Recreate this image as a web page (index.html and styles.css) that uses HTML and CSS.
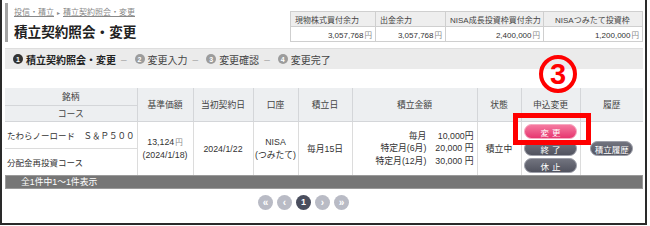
FILE: index.html
```html
<!DOCTYPE html>
<html lang="ja">
<head>
<meta charset="utf-8">
<link rel="stylesheet" href="styles.css">
</head>
<body>
<div class="frame">
  <div class="head">
    <div class="title-block">
      <div class="crumbs"><a href="#">投信・積立</a><span class="sep">▸</span><a href="#">積立契約照会・変更</a></div>
      <h1 class="title">積立契約照会・変更</h1>
    </div>
    <table class="funds">
      <colgroup><col class="f1"><col class="f2"><col class="f3"><col class="f4"></colgroup>
      <tr class="fh">
        <th>現物株式買付余力</th><th>出金余力</th><th>NISA成長投資枠買付余力</th><th class="last">NISAつみたて投資枠</th>
      </tr>
      <tr class="fd">
        <td>3,057,768<span class="yen">円</span></td>
        <td>3,057,768<span class="yen">円</span></td>
        <td>2,400,000<span class="yen">円</span></td>
        <td>1,200,000<span class="yen">円</span></td>
      </tr>
    </table>
  </div>

  <div class="steps">
    <span class="step current"><span class="num">1</span>積立契約照会・変更</span>
    <span class="dash">–</span>
    <span class="step"><span class="num">2</span>変更入力</span>
    <span class="dash">–</span>
    <span class="step"><span class="num">3</span>変更確認</span>
    <span class="dash">–</span>
    <span class="step"><span class="num">4</span>変更完了</span>
  </div>

  <table class="list">
    <colgroup>
      <col class="c-name"><col class="c-price"><col class="c-date"><col class="c-acct"><col class="c-day">
      <col class="c-amt"><col class="c-state"><col class="c-change"><col class="c-hist">
    </colgroup>
    <thead>
      <tr class="h1">
        <th>銘柄</th>
        <th rowspan="2">基準価額</th>
        <th rowspan="2">当初契約日</th>
        <th rowspan="2">口座</th>
        <th rowspan="2">積立日</th>
        <th rowspan="2">積立金額</th>
        <th rowspan="2">状態</th>
        <th rowspan="2">申込変更</th>
        <th rowspan="2">履歴</th>
      </tr>
      <tr class="h2"><th>コース</th></tr>
    </thead>
    <tbody>
      <tr class="r1">
        <td class="name">たわらノーロード　Ｓ＆Ｐ５００</td>
        <td rowspan="2" class="center"><div class="two">13,124<span class="yen">円</span></div><div class="two">(2024/1/18)</div></td>
        <td rowspan="2" class="center">2024/1/22</td>
        <td rowspan="2" class="center"><div class="two">NISA</div><div class="two">(つみたて)</div></td>
        <td rowspan="2" class="center">毎月15日</td>
        <td rowspan="2" class="amt">
          <div class="amounts">
            <span>毎月</span><span>10,000円</span>
            <span>特定月(6月)</span><span>20,000 円</span>
            <span>特定月(12月)</span><span>30,000 円</span>
          </div>
        </td>
        <td rowspan="2" class="center">積立中</td>
        <td rowspan="2" class="center">
          <div class="btns">
            <span class="btn pink">変更</span>
            <span class="btn dark">終了</span>
            <span class="btn dark">休止</span>
          </div>
        </td>
        <td rowspan="2" class="center"><span class="btn dark small">積立履歴</span></td>
      </tr>
      <tr class="r2">
        <td class="name">分配金再投資コース</td>
      </tr>
    </tbody>
  </table>
  <div class="count">全1件中1〜1件表示</div>

  <div class="pager">
    <span class="pg">«</span>
    <span class="pg">‹</span>
    <span class="pg active">1</span>
    <span class="pg">›</span>
    <span class="pg">»</span>
  </div>

  <div class="mark-box"></div>
  <div class="mark-num">3</div>
</div>
</body>
</html>
```
FILE: styles.css
```css
html, body {
  margin: 0;
  padding: 0;
  background: #fff;
}
body {
  font-family: "Liberation Sans", "Noto Sans CJK JP", sans-serif;
  color: #333;
}
.frame {
  position: relative;
  box-sizing: border-box;
  width: 647px;
  height: 225px;
  border: 2px solid #2a2a2a;
  border-top: none;
  padding: 0 2px 0 3px;
}
.head {
  display: flex;
  align-items: flex-start;
}
.title-block {
  margin-top: 3px;
  height: 39px;
  border-left: 3px solid #a3a3a3;
  padding-left: 6px;
  box-sizing: border-box;
}
.crumbs {
  margin-top: 5px;
  font-size: 8px;
  line-height: 10px;
  color: #888;
  white-space: nowrap;
}
.crumbs a {
  color: #888;
  text-decoration: underline;
}
.crumbs .sep {
  margin: 0 3px;
  font-size: 6px;
}
.title {
  margin: 7px 0 0;
  font-size: 13.6px;
  line-height: 16px;
  font-weight: bold;
  color: #222;
  white-space: nowrap;
}
.funds {
  margin: 11px 0 0 auto;
  border-collapse: collapse;
  table-layout: fixed;
  width: 352px;
  font-size: 8px;
}
.funds .f1 { width: 85px; }
.funds .f2 { width: 70px; }
.funds .f3 { width: 98px; }
.funds .f4 { width: 99px; }
.funds th, .funds td {
  border: 1px solid #cfcfcf;
  height: 14px;
  padding: 0 3px 0 4px;
  white-space: nowrap;
}
.funds th {
  background: #eeeeee;
  font-weight: normal;
  text-align: left;
  color: #444;
}
.funds th.last {
  padding-left: 11px;
}
.funds td {
  text-align: right;
  color: #333;
}
.yen {
  color: #888;
  font-size: 7.5px;
  margin-left: 1px;
}
.steps {
  margin-top: 6px;
  height: 21px;
  background: #ebebeb;
  border-top: 1px solid #dedede;
  box-sizing: border-box;
  display: flex;
  align-items: center;
  padding-left: 8px;
  font-size: 10px;
  color: #444;
  white-space: nowrap;
}
.step {
  display: inline-flex;
  align-items: center;
}
.step .num {
  display: inline-flex;
  align-items: center;
  justify-content: center;
  width: 10px;
  height: 10px;
  border-radius: 50%;
  background: #9c9c9c;
  color: #fff;
  font-size: 7px;
  font-weight: bold;
  margin-right: 3px;
}
.step.current {
  font-weight: bold;
  color: #222;
}
.step.current .num {
  background: #333;
}
.dash {
  color: #aaa;
  margin: 0 8px 0 5px;
}
.list {
  margin-top: 19px;
  width: 638px;
  border-collapse: collapse;
  table-layout: fixed;
  font-size: 8.8px;
}
.c-name { width: 132px; }
.c-price { width: 56px; }
.c-date { width: 60px; }
.c-acct { width: 45px; }
.c-day { width: 54px; }
.c-amt { width: 125px; }
.c-state { width: 44px; }
.c-change { width: 59px; }
.c-hist { width: 63px; }
.list th {
  background: #edeff1;
  border: 1px solid #d4d6d9;
  border-top: none;
  font-weight: normal;
  color: #444;
  padding: 0;
  text-align: center;
}
.list tr.h1 th { height: 17px; }
.list tr.h2 th { height: 15px; }
.list td {
  border: 1px solid #dcdcdc;
  border-bottom: none;
  padding: 0;
  color: #333;
  vertical-align: middle;
}
.list tr.r1 td { height: 26px; }
.list tr.r2 td { height: 26px; }
.list td.name {
  padding-left: 2px;
  white-space: nowrap;
  border-left: none;
  font-size: 8.5px;
}
.list th:first-child { border-left: none; }
.list th:last-child, .list td:last-child { border-right: none; }
.list td.center {
  text-align: center;
}
.two {
  line-height: 13px;
}
.list td.amt {
  text-align: right;
  padding-right: 3px;
}
.amounts {
  display: inline-grid;
  grid-template-columns: auto auto;
  column-gap: 9px;
  row-gap: 0;
  line-height: 12.5px;
  justify-items: end;
}
.btns {
  display: flex;
  flex-direction: column;
  align-items: center;
  gap: 2px;
}
.btn {
  display: inline-flex;
  align-items: center;
  justify-content: center;
  box-sizing: border-box;
  width: 53px;
  height: 15px;
  border-radius: 8px;
  color: #fff;
  font-size: 8.5px;
  letter-spacing: 3px;
  padding-left: 3px;
}
.btn.pink {
  background: linear-gradient(#f57aa0, #e6356f);
  border: 1px solid #f7a9c1;
}
.btn.dark {
  background: linear-gradient(#72747f, #51535f);
  border: 1px solid #9d9fa9;
}
.btn.small {
  width: 43px;
  letter-spacing: 0;
  padding-left: 0;
  font-size: 8.5px;
}
.count {
  height: 14px;
  box-sizing: border-box;
  width: 638px;
  background: #767676;
  border: 1px solid #9a9a9a;
  color: #fff;
  font-size: 8.8px;
  line-height: 12px;
  padding-left: 15px;
}
.pager {
  display: flex;
  gap: 4px;
  padding-left: 253px;
  margin-top: 6px;
}
.pg {
  display: inline-flex;
  align-items: center;
  justify-content: center;
  width: 15px;
  height: 15px;
  border-radius: 50%;
  background: #b9bbc5;
  color: #fff;
  font-size: 10px;
  font-weight: bold;
  line-height: 1;
}
.pg.active {
  background: #4a4e5e;
  font-size: 9px;
}
.mark-box {
  position: absolute;
  left: 511px;
  top: 113px;
  width: 78px;
  height: 32px;
  box-sizing: border-box;
  border: 5px solid #ff0000;
}
.mark-num {
  position: absolute;
  left: 537px;
  top: 55px;
  width: 38px;
  height: 38px;
  box-sizing: border-box;
  border: 4px solid #ff0000;
  border-radius: 50%;
  color: #ff0000;
  font-family: "Liberation Sans", sans-serif;
  font-weight: bold;
  font-size: 29px;
  line-height: 30px;
  text-align: center;
}
```
